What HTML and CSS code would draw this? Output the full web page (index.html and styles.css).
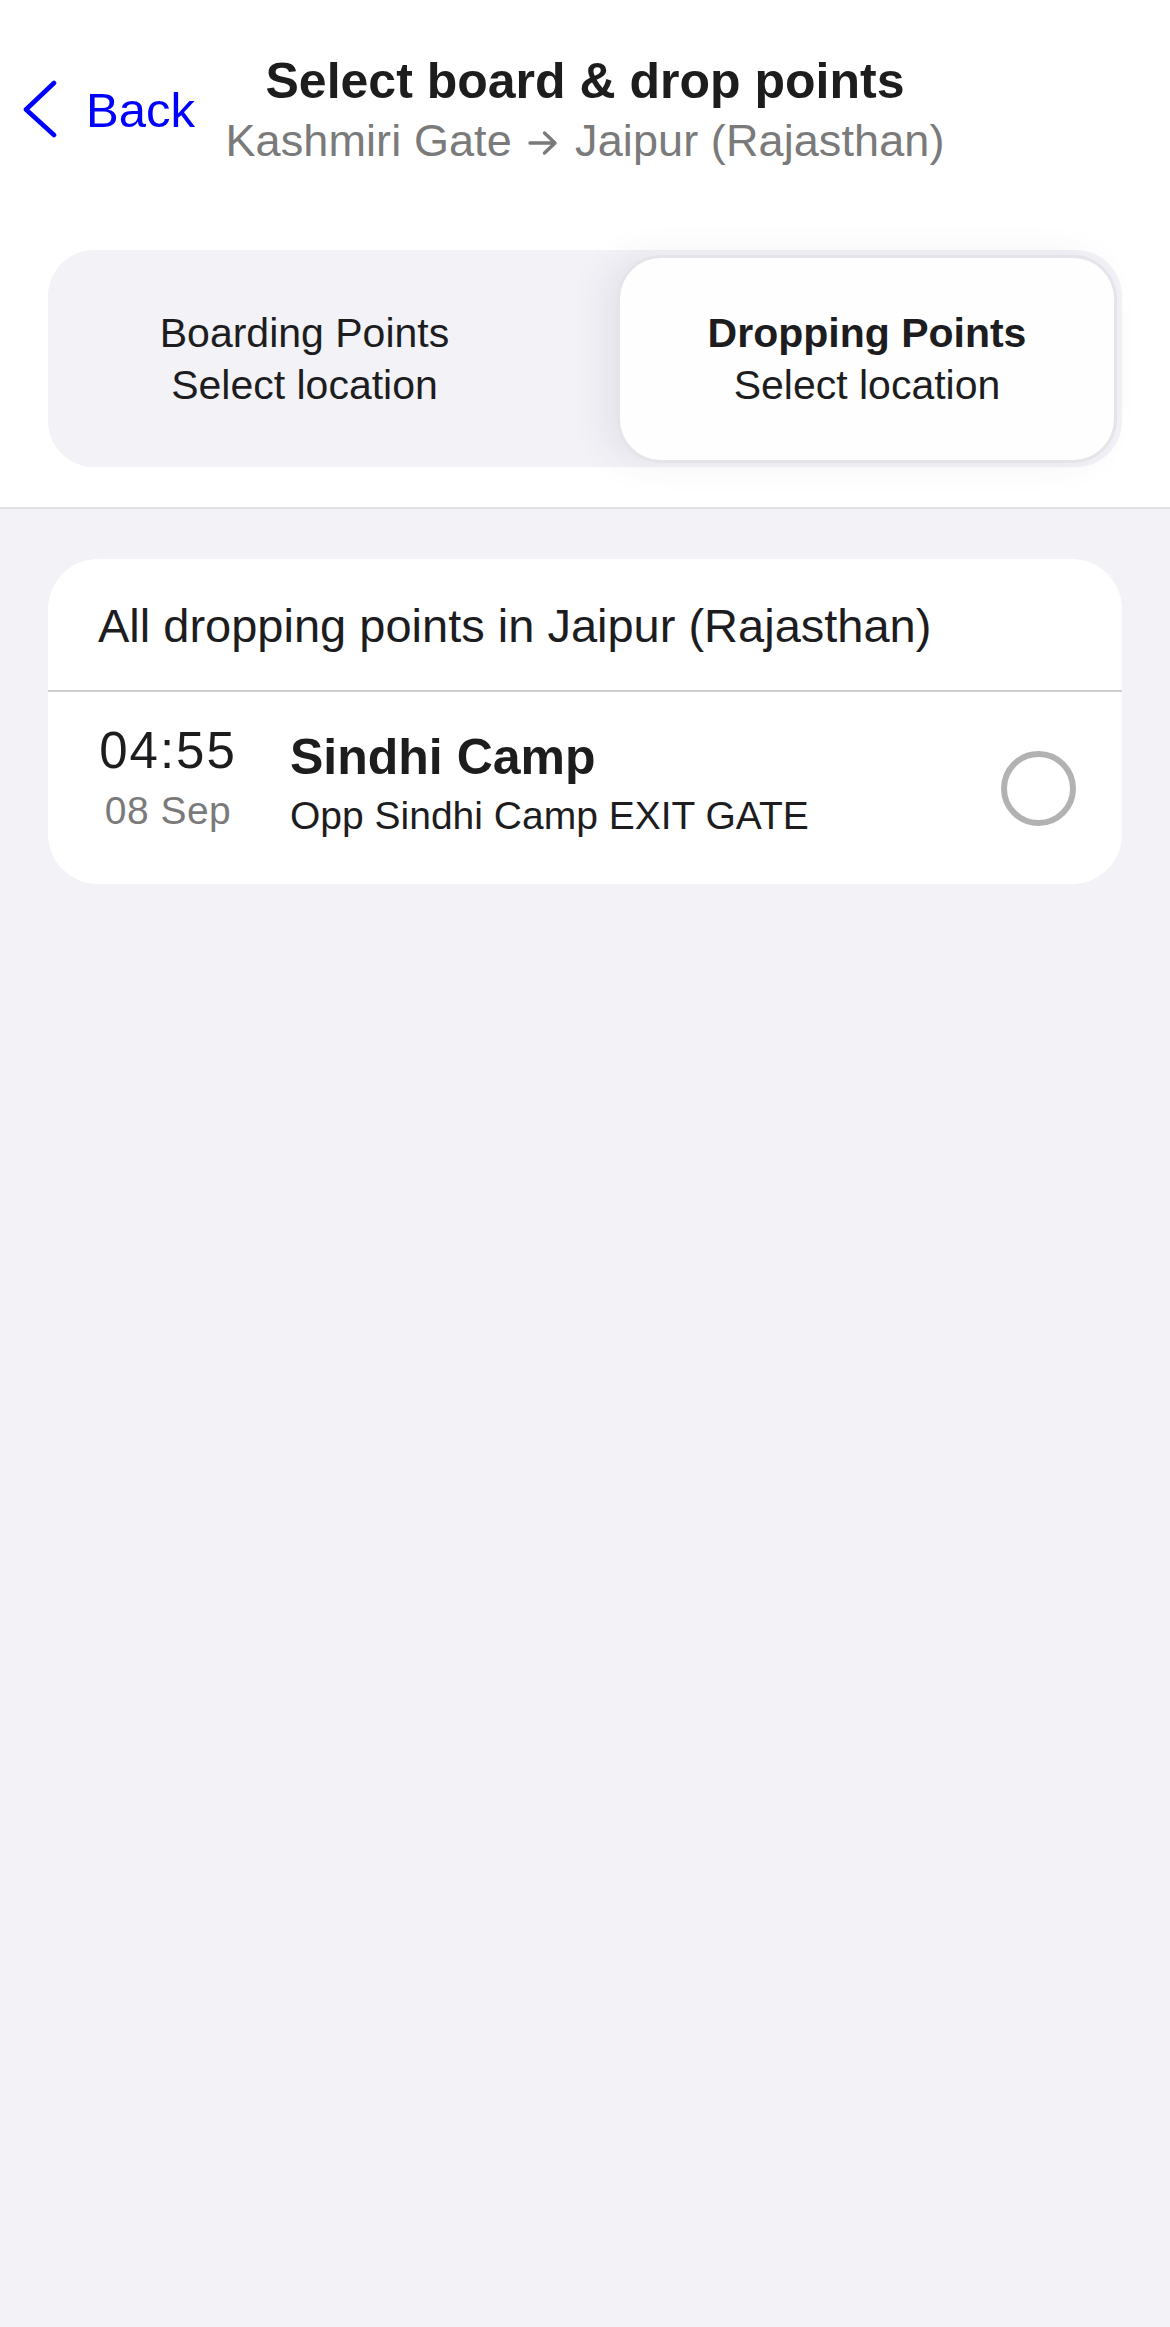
FILE: index.html
```html
<!DOCTYPE html>
<html lang="en">
<head>
<meta charset="utf-8">
<title>Select board &amp; drop points</title>
<link rel="stylesheet" href="styles.css">
</head>
<body>
<div class="top">
  <header class="nav">
    <a class="back" href="#">
      <svg class="chev" viewBox="0 0 37 58" width="37" height="58" aria-hidden="true">
        <polyline points="32,3 4,29.5 32,55" fill="none" stroke="#0000ff" stroke-width="4.6" stroke-linecap="round" stroke-linejoin="round"/>
      </svg>
      <span class="back-label">Back</span>
    </a>
    <div class="titles">
      <div class="title">Select board &amp; drop points</div>
      <div class="subtitle">Kashmiri Gate <svg class="arrow" viewBox="0 0 34 28" width="34" height="28" aria-label="→"><path d="M4 14 H29 M18.5 4 L29 14 L18.5 24" fill="none" stroke="#7a7a7a" stroke-width="3.4" stroke-linecap="round" stroke-linejoin="round"/></svg> Jaipur (Rajasthan)</div>
    </div>
    <div class="spacer"></div>
  </header>

  <div class="seg-wrap">
    <div class="seg">
      <div class="seg-item">
        <div class="seg-title">Boarding Points</div>
        <div class="seg-sub">Select location</div>
      </div>
      <div class="seg-item seg-active">
        <div class="seg-title">Dropping Points</div>
        <div class="seg-sub">Select location</div>
      </div>
    </div>
  </div>
</div>

<main class="content">
  <section class="card">
    <div class="card-head">All dropping points in Jaipur (Rajasthan)</div>
    <div class="row">
      <div class="time">
        <div class="time-hm">04:55</div>
        <div class="time-date">08 Sep</div>
      </div>
      <div class="place">
        <div class="place-name">Sindhi Camp</div>
        <div class="place-addr">Opp Sindhi Camp EXIT GATE</div>
      </div>
      <div class="radio"></div>
    </div>
  </section>
</main>
</body>
</html>
```

FILE: styles.css
```css
* { box-sizing: border-box; }

html, body {
  margin: 0;
  padding: 0;
}

body {
  background: #f2f2f7;
  font-family: "Liberation Sans", Arial, sans-serif;
  color: #1d1d1f;
  min-height: 2327px;
}

.top {
  background: #ffffff;
  border-bottom: 2px solid #e2e2e6;
}

/* Navigation bar */
.nav {
  display: grid;
  grid-template-columns: 1fr auto 1fr;
  align-items: center;
  padding-top: 51px;
}

.back {
  display: flex;
  align-items: center;
  justify-self: start;
  padding-left: 22px;
  color: #0000ff;
  text-decoration: none;
}

.chev {
  display: block;
  margin-top: -2px;
}

.back-label {
  margin-left: 27px;
  font-size: 49px;
  line-height: 58px;
}

.titles {
  text-align: center;
}

.title {
  font-size: 50px;
  line-height: 60px;
  font-weight: 700;
  color: #1d1d1d;
}

.subtitle {
  margin-top: 3px;
  font-size: 45px;
  line-height: 54px;
  color: #7a7a7a;
  letter-spacing: 0.1px;
}

.arrow {
  display: inline-block;
  vertical-align: -1px;
  margin: 0 2px;
}

/* Segmented control */
.seg-wrap {
  padding: 82px 48px 40px;
}

.seg {
  display: flex;
  justify-content: space-between;
  align-items: stretch;
  height: 217px;
  padding: 5px 5px 4px;
  background: #f2f2f7;
  border-radius: 46px;
}

.seg-item {
  display: flex;
  flex-direction: column;
  align-items: center;
  justify-content: center;
  width: 503px;
  text-align: center;
  font-size: 41px;
  line-height: 52px;
  color: #1d1d1f;
}

.seg-active {
  width: 500px;
  background: #fefefe;
  border: 3px solid #e4e4e9;
  border-radius: 44px;
  box-shadow: -14px 0 34px rgba(60, 60, 90, 0.08);
}

.seg-title {
  font-weight: 400;
}

.seg-active .seg-title {
  font-weight: 700;
}

/* List card */
.content {
  padding: 50px 48px 0;
}

.card {
  background: #ffffff;
  border-radius: 50px;
  overflow: hidden;
}

.card-head {
  height: 133px;
  padding-left: 50px;
  border-bottom: 2px solid #cfcfd3;
  font-size: 47px;
  line-height: 133px;
  color: #1d1d1f;
}

.row {
  display: flex;
  align-items: center;
  height: 192px;
  padding: 0 46px 0 50px;
}

.time {
  width: 140px;
  padding-bottom: 12px;
  text-align: center;
}

.time-hm {
  font-size: 51px;
  line-height: 58px;
  letter-spacing: 2px;
  color: #1d1d1f;
}

.time-date {
  font-size: 39px;
  line-height: 62px;
  letter-spacing: 0.5px;
  color: #7a7a7a;
}

.place {
  flex: 1;
  margin-left: 52px;
  padding-bottom: 10px;
}

.place-name {
  font-size: 50px;
  line-height: 60px;
  font-weight: 700;
  color: #1d1d1d;
}

.place-addr {
  margin-top: 5px;
  font-size: 39px;
  line-height: 48px;
  color: #1d1d1f;
}

.radio {
  width: 75px;
  height: 75px;
  border: 6px solid #b2b2b2;
  border-radius: 50%;
}
```
